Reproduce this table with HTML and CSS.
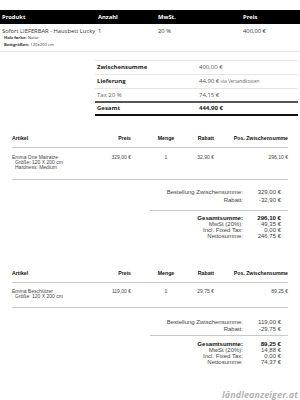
FILE: index.html
```html
<!DOCTYPE html>
<html lang="de">
<head>
<meta charset="utf-8">
<link rel="stylesheet" href="styles.css">
</head>
<body>
<div class="cart">
  <div class="cart-row cart-head">
    <div class="c">Produkt</div>
    <div class="c">Anzahl</div>
    <div class="c">MwSt.</div>
    <div class="c">Preis</div>
  </div>
  <div class="cart-row cart-item">
    <div class="c">
      <div class="pname">Sofort LIEFERBAR - Hausbett Lucky</div>
      <div class="meta"><b>Holz farbe:</b> Natur</div>
      <div class="meta"><b>Bettgrößen:</b> 120x200 cm</div>
    </div>
    <div class="c">1</div>
    <div class="c">20 %</div>
    <div class="c">400,00 €</div>
  </div>
</div>

<div class="totals">
  <div class="t-row"><div class="t-l strong">Zwischensumme</div><div class="t-v">400,00 €</div></div>
  <div class="t-row"><div class="t-l strong">Lieferung</div><div class="t-v">44,90 € <span class="via">via Versandkosten</span></div></div>
  <div class="t-row"><div class="t-l light">Tax 20 %</div><div class="t-v">74,15 €</div></div>
  <div class="t-row t-grand"><div class="t-l strong">Gesamt</div><div class="t-v strong">444,90 €</div></div>
</div>

<div class="inv inv-1">
  <div class="inv-row inv-head">
    <div class="col-a">Artikel</div>
    <div class="col-p">Preis</div>
    <div class="col-m">Menge</div>
    <div class="col-r">Rabatt</div>
    <div class="col-s">Pos. Zwischensumme</div>
  </div>
  <div class="inv-row inv-item">
    <div class="col-a">
      <div>Emma One Matratze</div>
      <div class="opt">Größe: 120 X 200 cm</div>
      <div class="opt">Hardness: Medium</div>
    </div>
    <div class="col-p">329,00 €</div>
    <div class="col-m">1</div>
    <div class="col-r">32,90 €</div>
    <div class="col-s">296,10 €</div>
  </div>
</div>

<div class="sum sum-1">
  <div class="sum-top">
    <div class="s-row"><div class="s-l">Bestellung Zwischensumme:</div><div class="s-v">329,00 €</div></div>
    <div class="s-row"><div class="s-l">Rabatt:</div><div class="s-v">-32,90 €</div></div>
  </div>
  <div class="sum-bottom">
    <div class="s-row bold"><div class="s-l">Gesamtsumme:</div><div class="s-v">296,10 €</div></div>
    <div class="s-row"><div class="s-l">MwSt (20%):</div><div class="s-v">49,35 €</div></div>
    <div class="s-row"><div class="s-l">Incl. Fixed Tax:</div><div class="s-v">0,00 €</div></div>
    <div class="s-row"><div class="s-l">Nettosumme:</div><div class="s-v">246,75 €</div></div>
  </div>
</div>

<div class="inv inv-2">
  <div class="inv-row inv-head">
    <div class="col-a">Artikel</div>
    <div class="col-p">Preis</div>
    <div class="col-m">Menge</div>
    <div class="col-r">Rabatt</div>
    <div class="col-s">Pos. Zwischensumme</div>
  </div>
  <div class="inv-row inv-item">
    <div class="col-a">
      <div>Emma Beschützer</div>
      <div class="opt">Größe: 120 X 200 cm</div>
    </div>
    <div class="col-p">119,00 €</div>
    <div class="col-m">1</div>
    <div class="col-r">29,75 €</div>
    <div class="col-s">89,25 €</div>
  </div>
</div>

<div class="sum sum-2">
  <div class="sum-top">
    <div class="s-row"><div class="s-l">Bestellung Zwischensumme:</div><div class="s-v">119,00 €</div></div>
    <div class="s-row"><div class="s-l">Rabatt:</div><div class="s-v">-29,75 €</div></div>
  </div>
  <div class="sum-bottom">
    <div class="s-row bold"><div class="s-l">Gesamtsumme:</div><div class="s-v">89,25 €</div></div>
    <div class="s-row"><div class="s-l">MwSt (20%):</div><div class="s-v">14,88 €</div></div>
    <div class="s-row"><div class="s-l">Incl. Fixed Tax:</div><div class="s-v">0,00 €</div></div>
    <div class="s-row"><div class="s-l">Nettosumme:</div><div class="s-v">74,37 €</div></div>
  </div>
</div>

<div class="watermark">ländleanzeiger.at</div>
</body>
</html>
```

FILE: styles.css
```css
html, body {
  margin: 0;
  padding: 0;
  background: #fff;
}
body {
  position: relative;
  width: 300px;
  height: 400px;
  overflow: hidden;
  font-family: "Open Sans", "Liberation Sans", sans-serif;
  color: #333;
}

/* ---------- cart table ---------- */
.cart {
  margin-top: 10px;
}
.cart-row {
  display: grid;
  grid-template-columns: 96px 60px 85px 59px;
}
.cart-row .c {
  padding-left: 2px;
}
.cart-head {
  height: 14px;
  background: #000;
  color: #fff;
  font-weight: 700;
  font-size: 5.8px;
  line-height: 14px;
}
.cart-item {
  padding: 4px 0 3px;
  border-bottom: 1px solid #e6e6e6;
  font-size: 5.8px;
  line-height: 7px;
}
.pname {
  white-space: nowrap;
}
.meta {
  font-size: 4.2px;
  line-height: 6.5px;
  padding-left: 2px;
}
.meta:first-of-type {
  margin-top: 2px;
}
.meta b {
  font-weight: 700;
}

/* ---------- totals ---------- */
.totals {
  margin: 8px 2px 0 95px;
  font-size: 6px;
}
.t-row {
  display: grid;
  grid-template-columns: 104px 1fr;
  border-top: 1px solid #e6e6e6;
  height: 13px;
  line-height: 13px;
}
.t-row:nth-child(3) {
  height: 12px;
  line-height: 12px;
}
.t-grand {
  border-top: 2px solid #555;
  border-bottom: 2px solid #111;
  height: 11px;
  line-height: 11px;
}
.t-l {
  padding-left: 2px;
}
.strong {
  font-weight: 700;
  color: #222;
}
.light {
  color: #666;
}
.t-v {
  color: #555;
}
.t-v.strong {
  color: #222;
}
.via {
  font-size: 4.5px;
  color: #666;
}

/* ---------- invoice tables ---------- */
.inv {
  margin: 0 12px;
  font-family: "Liberation Sans", Arial, sans-serif;
  font-size: 5px;
  color: #444;
}
.inv-1 {
  margin-top: 19px;
}
.inv-2 {
  margin-top: 31px;
}
.inv-row {
  display: grid;
  grid-template-columns: 88px 31px 55px 28px 74px;
}
.inv-head {
  font-weight: 700;
  color: #111;
  font-size: 5.2px;
  line-height: 6px;
  padding-bottom: 6px;
  border-bottom: 1px solid #c8c8c8;
}
.inv-item {
  line-height: 5px;
  border-bottom: 1px solid #c8c8c8;
}
.inv-1 .inv-item {
  padding: 7px 0 9px;
}
.inv-2 .inv-item {
  padding: 5.5px 0 8.5px;
}
.col-p, .col-r, .col-s {
  text-align: right;
  white-space: nowrap;
}
.col-m {
  text-align: center;
  padding-left: 15px;
}
.opt {
  padding-left: 3px;
}

/* ---------- summaries ---------- */
.sum {
  margin: 0 12px 0 150px;
  font-family: "Liberation Sans", Arial, sans-serif;
  font-size: 6px;
  color: #444;
}
.s-row {
  display: grid;
  grid-template-columns: 93px 38px;
}
.s-l, .s-v {
  text-align: right;
  white-space: nowrap;
}
.sum-top .s-row {
  line-height: 7.5px;
}
.sum-bottom .s-row {
  line-height: 6.2px;
}
.sum-top {
  border-bottom: 1px solid #c8c8c8;
}
.sum-1 .sum-top {
  padding: 9px 0 6px;
}
.sum-1 .sum-bottom {
  padding-top: 3.5px;
}
.sum-2 .sum-top {
  padding: 10.25px 0 1.75px;
}
.sum-2 .sum-bottom {
  padding-top: 4.2px;
}
.s-row.bold {
  font-weight: 700;
  font-size: 6.1px;
  color: #111;
}

/* ---------- watermark ---------- */
.watermark {
  position: absolute;
  right: 2px;
  top: 389px;
  font-family: "Open Sans", "Liberation Sans", sans-serif;
  font-style: italic;
  font-weight: 700;
  font-size: 9px;
  line-height: 12px;
  color: #b4b4b4;
  letter-spacing: 0.1px;
}
```
